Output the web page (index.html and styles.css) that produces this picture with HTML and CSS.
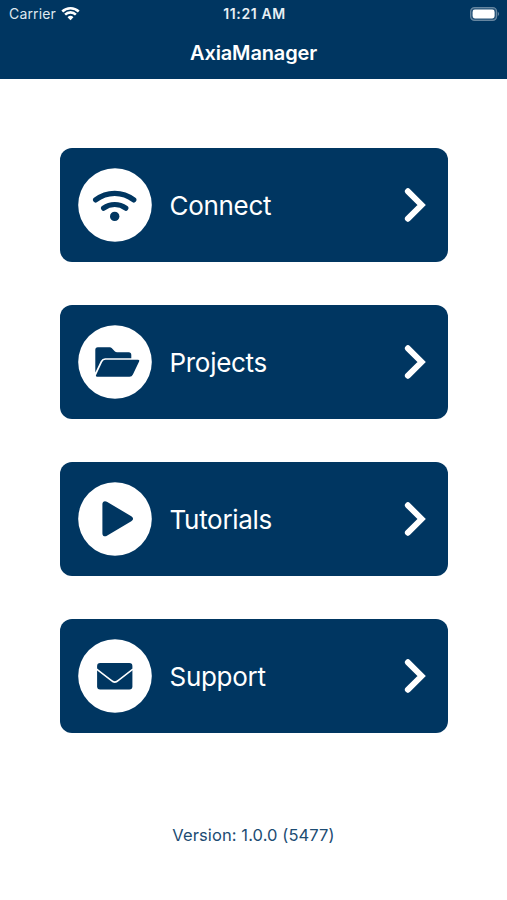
FILE: index.html
```
<!DOCTYPE html>
<html lang="en">
<head>
    <meta charset="UTF-8">
    <meta name="viewport" content="width=device-width, initial-scale=1.0">
    <title>AxiaManager</title>
    <link rel="stylesheet" href="styles.css">
</head>
<body>
    <header class="header">
        <div class="status-bar">
            <div class="carrier">
                <span>Carrier</span>
                <svg class="signal" viewBox="0 0 18 14" width="19" height="15">
                    <path d="M1.2 5.1 A11.2 11.2 0 0 1 16.8 5.1" />
                    <path d="M3.9 8 A7.3 7.3 0 0 1 14.1 8" />
                    <path class="solid" d="M9 13.4 L6.2 10.6 A4 4 0 0 1 11.8 10.6 Z" />
                </svg>
            </div>
            <div class="time">11:21 AM</div>
            <div class="battery">
                <svg viewBox="0 0 30 14" width="30" height="14">
                    <rect class="battery-case" x="0.6" y="0.6" width="26" height="12.8" rx="4" />
                    <rect class="battery-level" x="2.6" y="2.6" width="22" height="8.8" rx="2.3" />
                    <path class="battery-tip" d="M27.8 4.8 Q30.4 7 27.8 9.2 Z" />
                </svg>
            </div>
        </div>
        <h1>AxiaManager</h1>
    </header>

    <main class="menu">
        <a class="card" href="#connect">
            <svg class="icon" viewBox="0 0 74 74">
                <circle class="disc" cx="37" cy="37" r="36.8" />
                <path class="arc" d="M17.6 31.9 A31 31 0 0 1 55.8 31.9" />
                <path class="arc" d="M25.6 40.2 A18.5 18.5 0 0 1 47.8 40.2" />
                <circle cx="36.7" cy="48.4" r="4.7" />
            </svg>
            <span class="label">Connect</span>
            <svg class="chevron" viewBox="0 0 22 36"><path d="M3.9 4.3 L17.6 18 L3.9 31.7" /></svg>
        </a>
        <a class="card" href="#projects">
            <svg class="icon" viewBox="0 0 74 74">
                <circle class="disc" cx="37" cy="37" r="36.8" />
                <path d="M17.3 47.5 V24.8 Q17.3 22.3 19.8 22.3 H31.7 Q33 22.3 33.9 23.2 L36.7 26.3 Q37.7 27.3 39.1 27.3 H50.7 Q53.3 27.3 53.3 30 V33.2 H27.2 Q24.2 33.2 22.8 36 Z" />
                <path d="M27.6 34.8 H60.1 Q62 34.8 61.1 36.6 L54.9 49.5 Q53.9 51.7 51.5 51.7 H19.2 Q17.2 51.7 18.2 49.8 L24.2 37 Q25.3 34.8 27.6 34.8 Z" />
            </svg>
            <span class="label">Projects</span>
            <svg class="chevron" viewBox="0 0 22 36"><path d="M3.9 4.3 L17.6 18 L3.9 31.7" /></svg>
        </a>
        <a class="card" href="#tutorials">
            <svg class="icon" viewBox="0 0 74 74">
                <circle class="disc" cx="37" cy="37" r="36.8" />
                <path d="M24.4 22 C24.4 19.4 26.8 18.4 28.9 19.7 L53.3 34.3 Q55.1 35.4 55.1 36.8 Q55.1 38.2 53.3 39.3 L28.9 53.8 C26.8 55.1 24.4 54 24.4 51.4 Z" />
            </svg>
            <span class="label">Tutorials</span>
            <svg class="chevron" viewBox="0 0 22 36"><path d="M3.9 4.3 L17.6 18 L3.9 31.7" /></svg>
        </a>
        <a class="card" href="#support">
            <svg class="icon" viewBox="0 0 74 74">
                <circle class="disc" cx="37" cy="37" r="36.8" />
                <rect x="19.1" y="24" width="35.3" height="26.4" rx="3" />
                <path class="flap" d="M18.6 30.2 L33.2 41.4 Q36.8 44.8 40.4 41.4 L54.9 30.2" />
            </svg>
            <span class="label">Support</span>
            <svg class="chevron" viewBox="0 0 22 36"><path d="M3.9 4.3 L17.6 18 L3.9 31.7" /></svg>
        </a>
    </main>

    <footer class="version">Version: 1.0.0 (5477)</footer>
</body>
</html>
```
FILE: styles.css
```
* {
    box-sizing: border-box;
}

body {
    margin: 0;
    background: #fff;
    color: #003661;
    font-family: Inter, "Liberation Sans", sans-serif;
}

.header {
    height: 79px;
    background: #003661;
    color: #fff;
}

.status-bar {
    display: grid;
    grid-template-columns: 1fr auto 1fr;
    align-items: center;
    height: 27px;
    padding: 0 7px 0 9px;
    font-size: 14px;
}

.carrier {
    display: flex;
    align-items: center;
    gap: 5px;
    color: #dfe8ef;
    letter-spacing: 0.15px;
}

.signal path {
    fill: none;
    stroke: #fff;
    stroke-width: 2.4;
}

.signal .solid {
    fill: #fff;
    stroke: none;
}

.time {
    color: #e8eff4;
    font-size: 14px;
    font-weight: 600;
    letter-spacing: 0.6px;
}

.battery {
    display: flex;
    justify-content: flex-end;
}

.battery-case {
    fill: #28557a;
    stroke: #6686a0;
    stroke-width: 1.2;
}

.battery-level {
    fill: #fff;
}

.battery-tip {
    fill: #6686a0;
}

h1 {
    margin: 0;
    font-size: 20px;
    font-weight: 600;
    letter-spacing: -0.15px;
    line-height: 52px;
    text-align: center;
}

.menu {
    display: flex;
    flex-direction: column;
    gap: 43px;
    padding: 69.4px 59px 0 59.5px;
}

.card {
    display: flex;
    align-items: center;
    height: 114px;
    padding: 0 22px 0 18px;
    border-radius: 12px;
    background: #003661;
    color: #fff;
    text-decoration: none;
}

.icon {
    width: 74px;
    height: 74px;
    fill: #003661;
}

.icon .disc {
    fill: #fff;
}

.icon .arc {
    fill: none;
    stroke: #003661;
    stroke-width: 5.2;
    stroke-linecap: round;
}

.icon .flap {
    fill: none;
    stroke: #fff;
    stroke-width: 1.5;
}

.label {
    flex: 1;
    margin-left: 18px;
    padding-top: 1px;
    font-size: 26px;
    letter-spacing: -0.3px;
}

.chevron {
    width: 22px;
    height: 36px;
    fill: none;
    stroke: #fff;
    stroke-width: 6;
    stroke-linecap: round;
}

.version {
    margin-top: 90.6px;
    color: #1c4c73;
    font-size: 16.5px;
    letter-spacing: 0.1px;
    line-height: 22px;
    text-align: center;
}
```
